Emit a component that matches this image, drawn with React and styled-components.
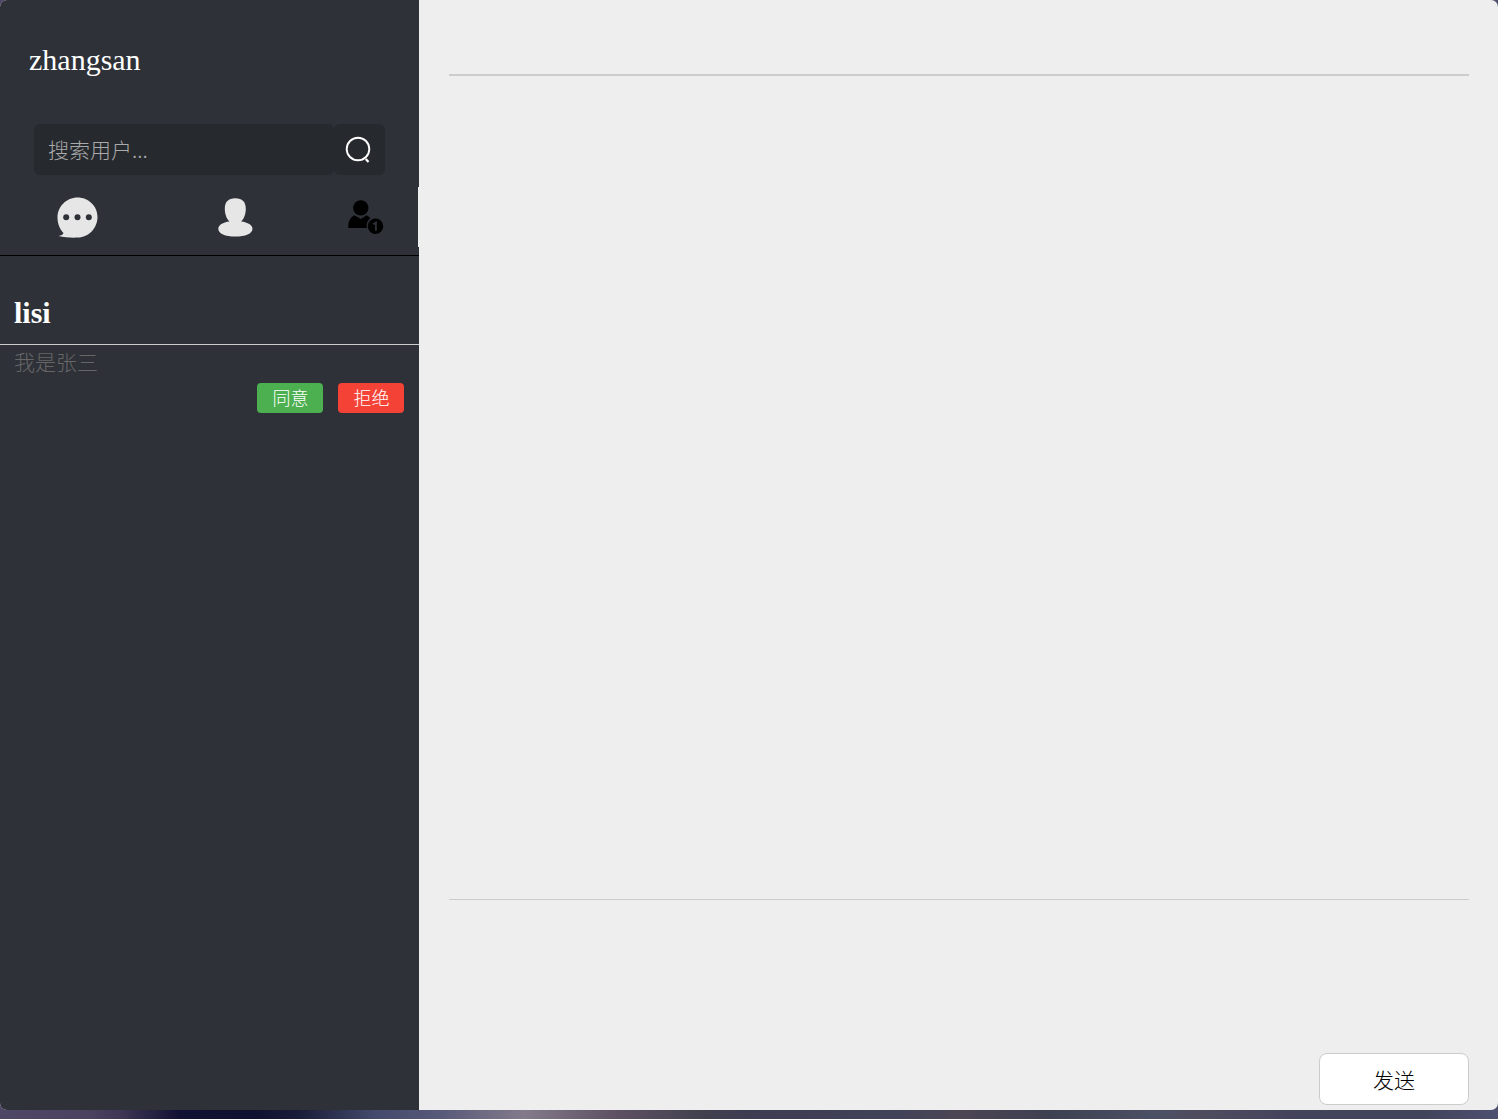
import React, { useState } from "react"
import styled, { createGlobalStyle } from "styled-components"

const serif = `"Liberation Serif", "Noto Sans CJK SC", serif`
const sans = `"Noto Sans CJK SC", sans-serif`

const GlobalStyle = createGlobalStyle`
  * {
    box-sizing: border-box;
  }
  body {
    margin: 0;
    font-family: ${serif};
  }
  button,
  input,
  textarea {
    margin: 0;
    padding: 0;
    border: 0;
    outline: none;
    background: none;
  }
  button {
    cursor: pointer;
  }
`

const Desktop = styled.div`
  min-height: 100vh;
  display: flex;
  padding-bottom: 9px;
  background: linear-gradient(
    to right,
    #4f4766 0%,
    #4b4260 6%,
    #3f3755 8%,
    #111133 12%,
    #101030 17%,
    #1a1d38 20%,
    #444a6c 25%,
    #555878 29%,
    #837a8b 35%,
    #5e5264 41%,
    #42404e 47%,
    #3c3c52 50%,
    #414358 60%,
    #4c4554 64%,
    #3d4050 70%,
    #4c5064 77%,
    #4f4c5e 80%,
    #43445c 86%,
    #41445a 95%,
    #4e5070 100%
  );
`

const Window = styled.div`
  flex: 1;
  display: flex;
  border-radius: 7px;
  overflow: hidden;
  background: #eee;
`

const Sidebar = styled.aside`
  width: 28%;
  background: #2e3138;
  color: #fff;
`

const UserName = styled.header`
  padding: 42px 29px 47px;
  font-size: 30px;
  line-height: 35px;
`

const SearchForm = styled.form`
  display: flex;
  height: 51px;
  margin: 0 34px 12px;
`

const SearchInput = styled.input`
  flex: 1;
  min-width: 0;
  padding: 0 14px 2px;
  border-radius: 6px;
  background: #26292e;
  color: #fff;
  font-family: ${sans};
  font-size: 21px;
  font-weight: 300;

  &::placeholder {
    color: #aaa;
    opacity: 1;
  }
`

const SearchButton = styled.button`
  display: flex;
  align-items: center;
  justify-content: center;
  width: 51px;
  padding-right: 2px;
  border-radius: 6px;
  background: #26292e;
`

const Tabs = styled.nav`
  padding-bottom: 8px;
  border-bottom: 1px solid #000;
`

const TabList = styled.div`
  display: grid;
  grid-template-columns: 37% 38% 25%;
  height: 60px;
  border-right: 1px solid #eee;
`

const Tab = styled.button`
  display: flex;
  align-items: center;
  justify-content: center;
`

const RequestName = styled.h2`
  margin: 0;
  padding: 39px 14px 14px;
  border-bottom: 1px solid #ccc;
  font-size: 30px;
  line-height: 35px;
`

const RequestText = styled.p`
  margin: 0;
  padding: 2px 14px 0;
  color: #666;
  font-size: 21px;
  font-weight: 300;
  line-height: 32px;
`

const Actions = styled.div`
  display: flex;
  justify-content: flex-end;
  gap: 15px;
  padding: 4px 15px;
`

const ActionButton = styled.button`
  width: 66px;
  height: 30px;
  padding-bottom: 2px;
  border-radius: 4px;
  background: ${({ $reject }) => ($reject ? "#f44336" : "#4caf50")};
  color: #fff;
  font-family: ${sans};
  font-size: 18px;
  font-weight: 300;
  line-height: 28px;
`

const Chat = styled.main`
  flex: 1;
  display: flex;
  flex-direction: column;
  padding: 0 29px 5px 30px;
`

const ChatHeader = styled.header`
  height: 76px;
  border-bottom: 2px solid #ccc;
`

const Messages = styled.section`
  flex: 1;
`

const Composer = styled.form`
  display: flex;
  flex-direction: column;
  align-items: flex-end;
  border-top: 1px solid #ccc;
`

const MessageInput = styled.textarea`
  width: 100%;
  height: 153px;
  padding: 12px 0;
  resize: none;
  font-family: ${sans};
  font-size: 21px;
`

const SendButton = styled.button`
  width: 150px;
  height: 52px;
  border: 1px solid #ccc;
  border-radius: 8px;
  background: #fff;
  color: #000;
  font-family: ${sans};
  font-size: 21px;
  font-weight: 300;
`

const Icon = styled.svg`
  display: block;
  width: ${({ $size }) => $size}px;
  height: ${({ $size }) => $size}px;
`

const SearchIcon = () => (
  <Icon $size={28} viewBox="0 0 28 28" fill="none" stroke="#fff" aria-hidden="true">
    <circle cx="13" cy="13" r="11.3" strokeWidth="1.9" />
    <path d="M20.8 23l2.7 3" strokeWidth="2.2" />
  </Icon>
)

const ChatIcon = () => (
  <Icon $size={42} viewBox="0 0 42 42" aria-hidden="true">
    <path
      fill="#e6e6e6"
      d="M21.5 1.5C32.5 1.5 41.5 10 41.5 21S32.5 41.5 22 41.5C15.500 42 8.500 41.200 2.500 40C5.500 39.500 7 38.500 7.500 37C3.700 33 1.500 27.500 1.500 21.500C1.500 10.500 10.500 1.500 21.500 1.500Z"
    />
    <g fill="#2e3138">
      <circle cx="10.2" cy="21.3" r="3" />
      <circle cx="21.5" cy="21.3" r="3" />
      <circle cx="32.8" cy="21.3" r="3" />
    </g>
  </Icon>
)

const ContactIcon = () => (
  <Icon $size={40} viewBox="0 0 40 40" fill="#e6e6e6" aria-hidden="true">
    <path d="M21.3 1.2C28.3 1.2 31.8 4.700 31.8 11.700C31.8 17.200 29.800 22.200 27.100 24.500C33.800 25.200 38.500 28.200 38.500 31.700C38.500 36.700 31.300 39.500 21.300 39.500S4.300 36.700 4.300 31.700C4.300 28.200 8.800 25.200 15.500 24.500C12.800 22.200 10.800 17.200 10.800 11.700C10.800 4.700 14.300 1.200 21.300 1.200Z" />
  </Icon>
)

const RequestIcon = () => (
  <Icon $size={36} viewBox="0 0 36 36" aria-hidden="true">
    <circle cx="12.8" cy="8.9" r="7.7" />
    <path d="M0.3 29V26.700C0.3 22 2.800 18 6.300 16.200L12.800 20L18.600 16.200C20.300 17 21.600 18.200 22.300 19.300C19.800 21.300 18.500 24 18.600 26.700C18.600 27.600 18.800 28.400 19 29Z" />
    <circle cx="27.5" cy="27.3" r="7.7" />
    <path d="M25.2 25.300L27.900 23.600V31.800" fill="none" stroke="#2e3138" strokeWidth="1.9" />
  </Icon>
)

const tabs = [
  { id: "chat", label: "消息", icon: ChatIcon },
  { id: "contact", label: "联系人", icon: ContactIcon },
  { id: "request", label: "好友申请", icon: RequestIcon },
]

const App = () => {
  const [tab, setTab] = useState("request")
  const [keyword, setKeyword] = useState("")
  const [message, setMessage] = useState("")

  return (
    <Desktop>
      <GlobalStyle />
      <Window>
        <Sidebar>
          <UserName>zhangsan</UserName>
          <SearchForm onSubmit={e => e.preventDefault()}>
            <SearchInput
              aria-label="搜索用户"
              placeholder="搜索用户..."
              value={keyword}
              onChange={e => setKeyword(e.target.value)}
            />
            <SearchButton type="submit" aria-label="搜索">
              <SearchIcon />
            </SearchButton>
          </SearchForm>
          <Tabs>
            <TabList>
              {tabs.map(({ id, label, icon: TabIcon }) => (
                <Tab
                  key={id}
                  type="button"
                  aria-label={label}
                  aria-pressed={tab === id}
                  onClick={() => setTab(id)}
                >
                  <TabIcon />
                </Tab>
              ))}
            </TabList>
          </Tabs>
          {tab === "request" && (
            <article>
              <RequestName>lisi</RequestName>
              <RequestText>我是张三</RequestText>
              <Actions>
                <ActionButton type="button">同意</ActionButton>
                <ActionButton type="button" $reject>
                  拒绝
                </ActionButton>
              </Actions>
            </article>
          )}
        </Sidebar>
        <Chat>
          <ChatHeader />
          <Messages />
          <Composer onSubmit={e => e.preventDefault()}>
            <MessageInput
              aria-label="消息内容"
              value={message}
              onChange={e => setMessage(e.target.value)}
            />
            <SendButton type="submit">发送</SendButton>
          </Composer>
        </Chat>
      </Window>
    </Desktop>
  )
}

export default App
